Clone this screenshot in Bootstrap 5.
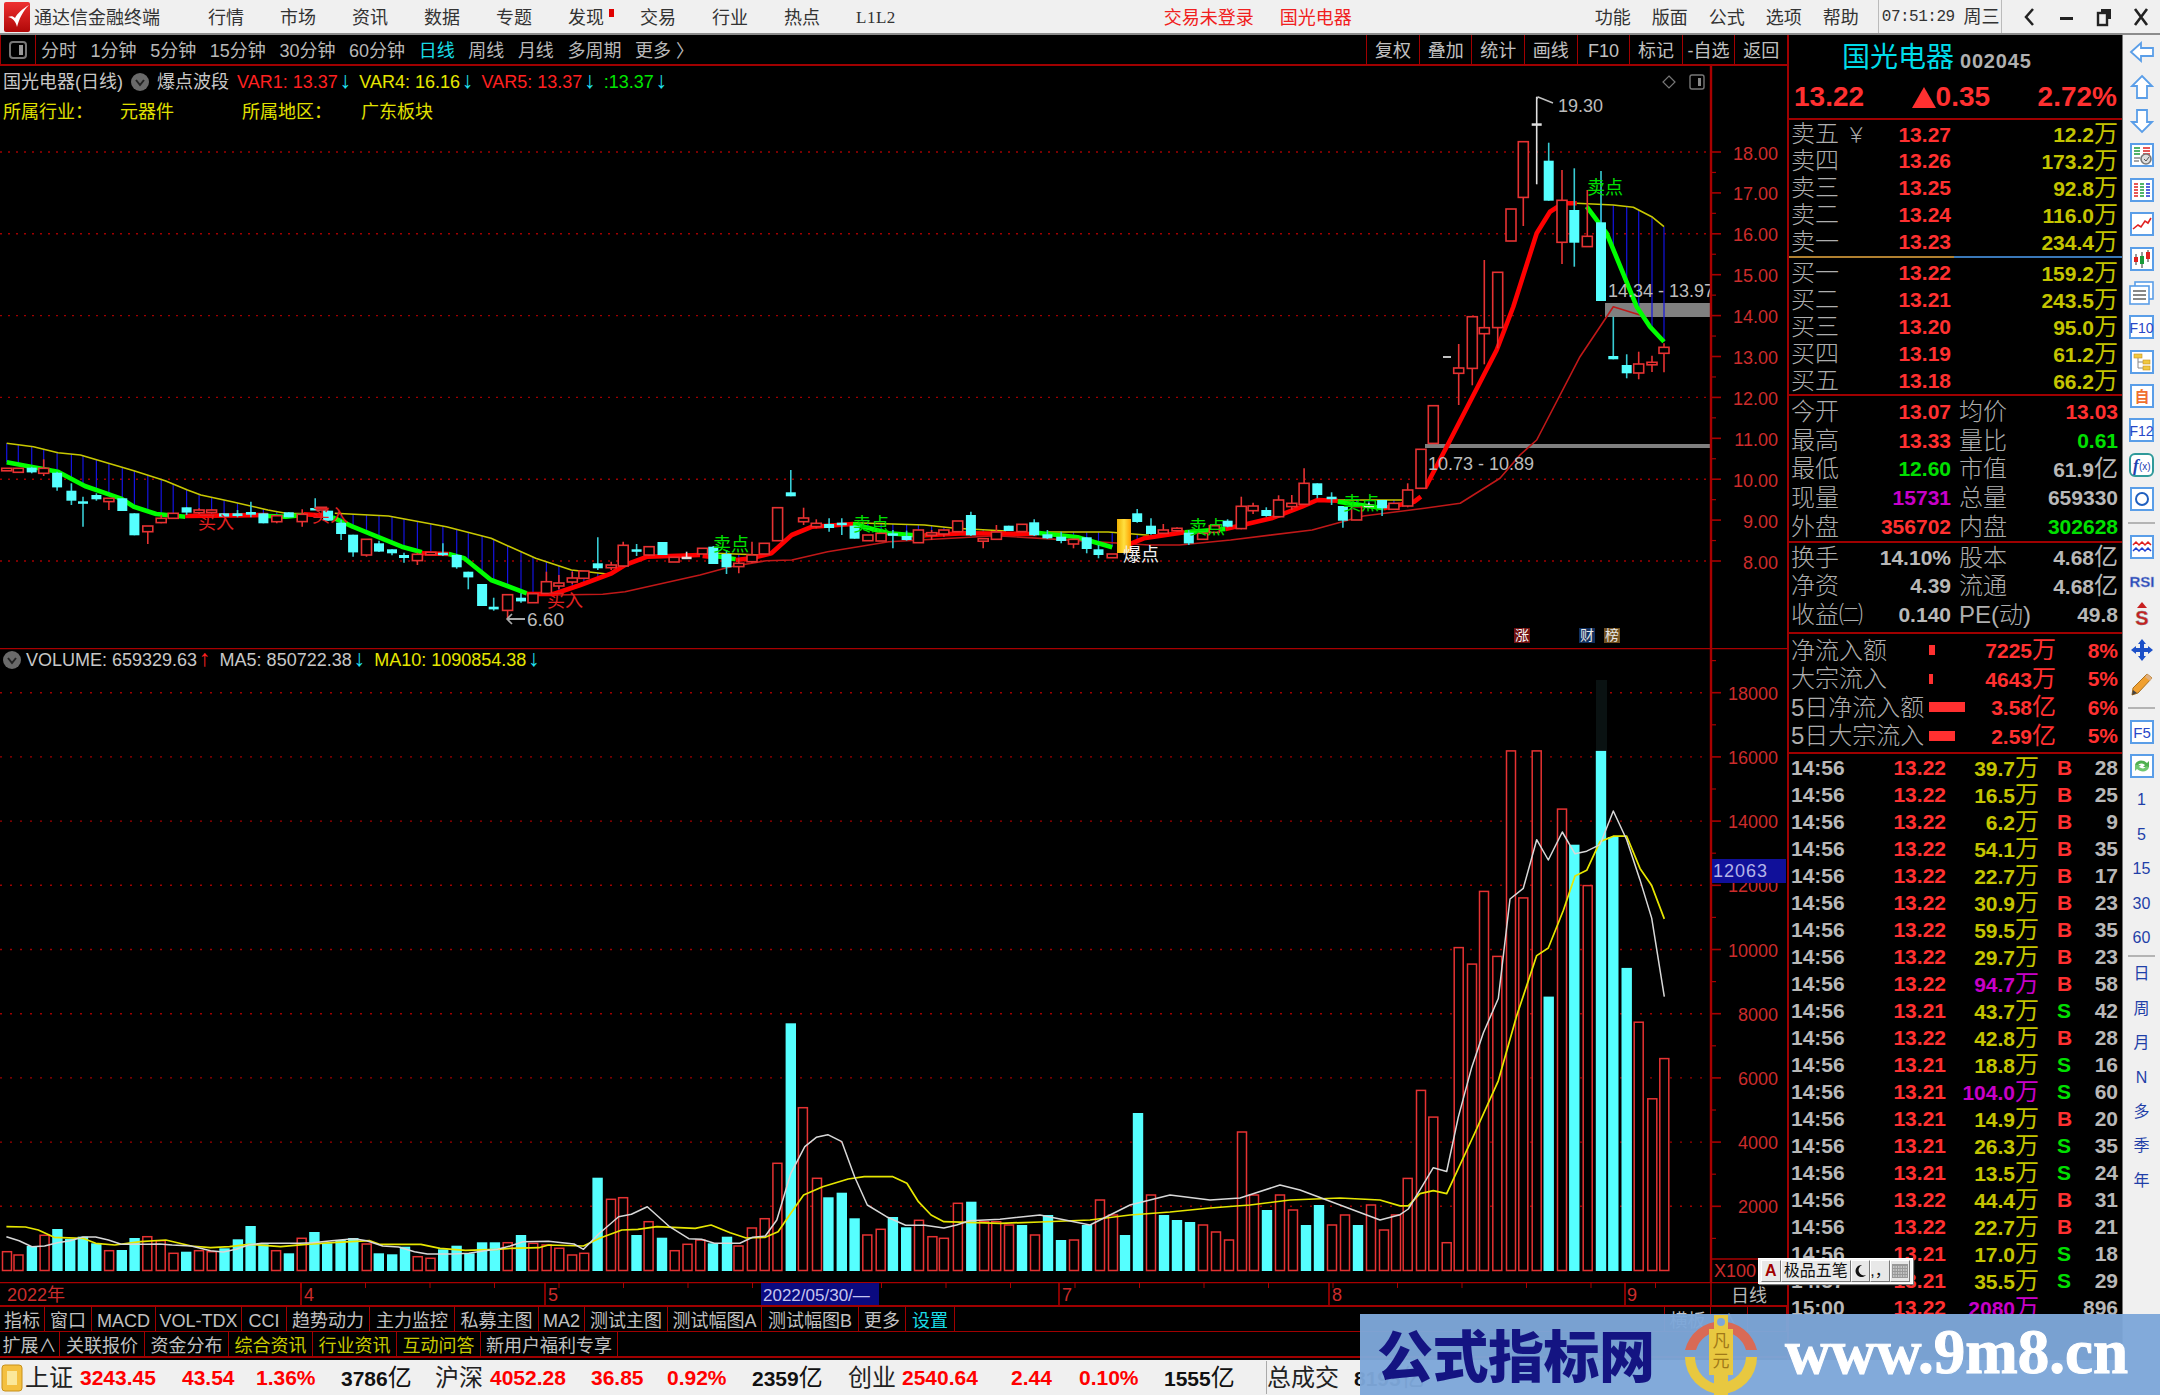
<!DOCTYPE html>
<html lang="zh-CN">
<head>
<meta charset="utf-8">
<title>通达信金融终端</title>
<link href="https://cdn.jsdelivr.net/npm/bootstrap@5.3.0/dist/css/bootstrap.min.css" rel="stylesheet">
<style>
html,body{margin:0;background:#000;}
body{font-family:"Liberation Sans","Noto Sans CJK SC",sans-serif;font-size:18px;line-height:1;color:#c0c0c0;}
.tdx-app{position:relative;width:2160px;height:1395px;overflow:hidden;background:#000;}
.tdx-title{height:35px;flex:none;background:#f0f0f0;border-bottom:2px solid #8c8c8c;color:#333;white-space:nowrap;}
.tdx-title>span,.tdx-title>div:not(.tdx-clock):not(.tdx-win){padding-top:2px;}
.tdx-logo{margin-left:4px;width:26px;height:30px;flex:none;}
.tdx-appname{margin-left:4px;width:174px;flex:none;}
.tdx-menu{column-gap:36px;}
.tdx-dot{width:5px;height:8px;background:#e00000;margin:-10px -10px 0 -31px;}
.tdx-l12{font-family:"Liberation Serif",serif;font-size:17px;letter-spacing:.5px;}
.tdx-alert{margin-left:268px;column-gap:26px;color:#f02020;}
.tdx-func{margin-left:243px;column-gap:21px;}
.tdx-clock{margin-left:19px;height:33px;width:124px;border-left:1px solid #bbb;border-right:1px solid #bbb;padding-left:3px;column-gap:9px;}
.tdx-clock span:first-child{font-size:16px;font-family:"Liberation Mono",monospace;letter-spacing:-.5px;}
.tdx-win{margin-left:19px;column-gap:19px;}
.tdx-body{height:1325px;flex:none;}
.tdx-left{width:1787px;flex:none;}
.tdx-tool{height:31px;flex:none;border-bottom:2px solid #a00000;}
.tdx-tool-ic{width:36px;height:29px;border-right:1px solid #a00000;border-left:1px solid #a00000;}
.tdx-tool-items{margin-left:5px;column-gap:13.6px;color:#b8b8b8;padding-top:3px;}
.tdx-cyan{color:#19dce6;}
.tdx-tool-r{width:52.6px;height:29px;border-left:1px solid #a00000;color:#c0c0c0;padding-top:3px;}
.tdx-pane{position:relative;flex:none;}
.tdx-price{height:582px;}
.tdx-vol{height:634px;}
.tdx-svg{position:absolute;left:0;top:0;display:block;}
.tdx-legend{position:relative;height:32px;padding-left:3px;column-gap:8px;white-space:nowrap;}
.tdx-legend2{position:relative;height:27px;padding-left:3px;color:#e0e000;}
.tdx-legend2 span:nth-child(1){width:117px;}
.tdx-legend2 span:nth-child(2){width:122px;}
.tdx-legend2 span:nth-child(3){width:119px;}
.tdx-volleg{position:relative;height:24px;padding-left:3px;column-gap:5px;white-space:nowrap;}
.c-red{color:#ff2020;}.c-yel{color:#e6e600;}.c-grn{color:#00e600;}.c-wht{color:#c8c8c8;}
.tdx-arr{color:#20e0f0;font-weight:400;margin-left:2px;font-size:23px;line-height:14px;}
.tdx-arr.up{color:#ff2020;}
.tdx-cell{display:flex;align-items:center;justify-content:center;border-right:1px solid #a00000;white-space:nowrap;overflow:hidden;}
.tdx-tabs1{display:grid;grid-template-columns:45px 47px 64px 86px 45px 83px 85px 84px 46px 83px 94px 97px 47px 49px 710px 46px 37px 39px;height:27px;border-top:2px solid #a00000;border-bottom:1px solid #a00000;flex:none;}
.tdx-tabs1 .tdx-cell{padding-top:3px;}
.tdx-tabs2{display:grid;grid-template-columns:60px 85px 84px 84px 84px 84px 137px;height:26px;border-bottom:2px solid #a00000;flex:none;}
.tdx-tabs2 .tdx-cell{padding-top:4px;}
.tdx-olive{color:#c8c800;}
.tdx-panel{width:336px;flex:none;border-left:2px solid #a00000;border-right:1px solid #777;overflow:hidden;}
.tdx-name{height:41px;padding:5px 0 0 53px;column-gap:6px;}
.tdx-name b{font-weight:400;font-size:28px;color:#00dcea;}
.tdx-name i{font-style:normal;font-weight:700;font-size:20px;letter-spacing:.8px;color:#b0b0b0;padding-top:6px;}
.tdx-quote{height:44px;padding:0 5px;border-bottom:2px solid #a00000;font-size:28px;font-weight:700;color:#ff3030;}
.tdx-lv{display:grid;grid-template-columns:100px 60px 167px;padding-left:2px;height:27px;align-items:center;}
.tdx-lbl{font-size:24px;color:#aeaeae;white-space:nowrap;line-height:27px;font-weight:300;}
.tdx-num{font-size:21px;font-weight:700;text-align:right;white-space:nowrap;}
.tdx-wan{font-size:24px;font-weight:400;}
.n-red{color:#ff3030;}.n-ol{color:#c4c400;}.n-grn{color:#00e000;}.n-mag{color:#c800c8;}.n-gry{color:#b8b8b8;}
.tdx-split{height:2px;margin-top:1px;margin-bottom:1px;background:linear-gradient(90deg,#b08030 0 165px,#3a78b8 165px);}
.tdx-rule{border-bottom:2px solid #a00000;}
.tdx-st1{padding-top:1px;}
.tdx-st2{padding-bottom:3px;}
.tdx-flw{padding:2px 0;}
.tdx-st{display:grid;grid-template-columns:84px 76px 8px 70px 89px;padding-left:2px;height:28.75px;align-items:center;}
.tdx-fl{display:grid;grid-template-columns:138px 45px 82px 62px;padding-left:2px;height:28.5px;align-items:center;}
.tdx-flbar{height:10px;background:#ff3030;}
.tdx-tk{display:grid;grid-template-columns:60px 95px 93px 38px 41px;padding-left:2px;height:27px;align-items:center;}
.tdx-bs{padding-left:18px;font-size:21px;font-weight:700;}
.tdx-side{width:37px;flex:none;background:#f0f0f0;padding-top:0;}
.tdx-slot{height:34.4px;flex:none;color:#1f3fa8;font-size:16px;}
.tdx-sep{height:2px;flex:none;margin:6px 4px 5px;background:#b4b4b4;}
.tdx-sep2{height:2px;flex:none;margin:0 4px;background:#b4b4b4;}
.tdx-foot{height:35px;flex:none;background:#f0f0f0;color:#222;display:grid;grid-template-columns:25px 55px 102px 74px 85px 94px 55px 101px 76px 85px 96px 54px 109px 68px 85px 102px 1px 87px 120px;align-items:center;white-space:nowrap;}
.tdx-fl1{font-size:24px;}
.tdx-fn{font-size:21px;font-weight:700;color:#ff0000;}
.tdx-fk{font-size:21px;font-weight:700;color:#111;}
.tdx-fk em{font-style:normal;font-weight:400;font-size:24px;}
.tdx-fdiv{height:33px;background:#aaa;}
.tdx-ime{position:absolute;left:1758px;top:1258px;width:155px;height:26px;background:#f4f4f4;border:1px solid #fff;box-shadow:1px 1px 1px #777;padding:1px 2px;}
.tdx-ime span{height:22px;display:flex;align-items:center;justify-content:center;border:1px solid;border-color:#fff #777 #777 #fff;background:#e8e8e8;color:#111;font-size:16px;}
.tdx-ime .a{width:20px;color:#a00000;font-weight:700;}
.tdx-ime .b{width:72px;}
.tdx-ime .c{width:20px;}
.tdx-mark{position:absolute;left:1360px;top:1314px;width:800px;height:81px;background:rgba(125,167,217,.965);}
.tdx-mark-cn{font-family:"Noto Sans CJK SC",sans-serif;font-weight:900;font-size:56px;color:#141482;margin-left:17px;width:304px;letter-spacing:-.5px;white-space:nowrap;margin-top:-4px;}
.tdx-mark-en{font-family:"Liberation Serif",serif;font-weight:700;font-size:63px;color:#fff;margin-left:24px;white-space:nowrap;-webkit-text-stroke:1px #fff;margin-top:-4px;}
</style>
</head>
<body>
<div class="tdx-app d-flex flex-column">

<header class="tdx-title d-flex align-items-center">
  <svg class="tdx-logo" viewBox="0 0 26 30"><defs><linearGradient id="lg" x1="0" y1="0" x2="0" y2="1"><stop offset="0" stop-color="#ee3030"/><stop offset="1" stop-color="#b00808"/></linearGradient></defs><rect width="26" height="30" rx="2" fill="url(#lg)"/><path d="M4 15 C9 16 12 20 13 25 C15 17 19 9 25 3 C18 7 13 12 11 16 C9 14 7 14 4 15Z" fill="#fff"/></svg>
  <span class="tdx-appname">通达信金融终端</span>
  <div class="tdx-menu d-flex align-items-center">
    <span>行情</span><span>市场</span><span>资讯</span><span>数据</span><span>专题</span><span>发现</span><span class="tdx-dot"></span><span>交易</span><span>行业</span><span>热点</span><span class="tdx-l12">L1L2</span>
  </div>
  <div class="tdx-alert d-flex"><span>交易未登录</span><span>国光电器</span></div>
  <div class="tdx-func d-flex"><span>功能</span><span>版面</span><span>公式</span><span>选项</span><span>帮助</span></div>
  <div class="tdx-clock d-flex align-items-center"><span>07:51:29</span><span>周三</span></div>
  <div class="tdx-win d-flex align-items-center">
    <svg width="18" height="20" viewBox="0 0 18 20"><path d="M12 2 L5 10 L12 18" fill="none" stroke="#222" stroke-width="2.5"/></svg>
    <svg width="18" height="20" viewBox="0 0 18 20"><rect x="2" y="10" width="13" height="3" fill="#222"/></svg>
    <svg width="18" height="20" viewBox="0 0 18 20"><path d="M6 2H16V12H13V5H6Z" fill="#222"/><rect x="3" y="6" width="9" height="12" fill="none" stroke="#222" stroke-width="2.4"/></svg>
    <svg width="18" height="20" viewBox="0 0 18 20"><path d="M3 2 L15 18 M15 2 L3 18" stroke="#222" stroke-width="2.6"/></svg>
  </div>
</header>

<div class="tdx-body d-flex">
<main class="tdx-left d-flex flex-column">
  <div class="tdx-tool d-flex align-items-center">
    <div class="tdx-tool-ic d-flex align-items-center justify-content-center"><svg width="18" height="20" viewBox="0 0 18 20"><rect x="1" y="2" width="16" height="16" rx="3" fill="none" stroke="#777" stroke-width="2"/><rect x="10" y="5" width="4" height="10" fill="#999"/></svg></div>
    <div class="tdx-tool-items d-flex align-items-center">
      <span>分时</span><span>1分钟</span><span>5分钟</span><span>15分钟</span><span>30分钟</span><span>60分钟</span><span class="tdx-cyan">日线</span><span>周线</span><span>月线</span><span>多周期</span><span>更多 〉</span>
    </div>
    <div class="d-flex ms-auto">
      <span class="tdx-tool-r d-flex align-items-center justify-content-center">复权</span><span class="tdx-tool-r d-flex align-items-center justify-content-center">叠加</span><span class="tdx-tool-r d-flex align-items-center justify-content-center">统计</span><span class="tdx-tool-r d-flex align-items-center justify-content-center">画线</span><span class="tdx-tool-r d-flex align-items-center justify-content-center">F10</span><span class="tdx-tool-r d-flex align-items-center justify-content-center">标记</span><span class="tdx-tool-r d-flex align-items-center justify-content-center">-自选</span><span class="tdx-tool-r d-flex align-items-center justify-content-center">返回</span>
    </div>
  </div>

  <section class="tdx-pane tdx-price">
    <svg id="pc" class="tdx-svg" width="1787" height="582" viewBox="0 66 1787 582"></svg>
    <div class="tdx-legend d-flex align-items-center">
      <span class="c-wht">国光电器(日线)</span>
      <svg width="18" height="18" viewBox="0 0 18 18"><circle cx="9" cy="9" r="9" fill="#6a6a6a"/><path d="M5 7 L9 12 L13 7" fill="none" stroke="#222" stroke-width="2"/></svg>
      <span class="c-wht">爆点波段</span>
      <span class="c-red">VAR1: 13.37<span class="tdx-arr">↓</span></span>
      <span class="c-yel">VAR4: 16.16<span class="tdx-arr">↓</span></span>
      <span class="c-red">VAR5: 13.37<span class="tdx-arr">↓</span></span>
      <span class="c-grn">:13.37<span class="tdx-arr">↓</span></span>
    </div>
    <div class="tdx-legend2 d-flex align-items-center"><span>所属行业：</span><span>元器件</span><span>所属地区：</span><span>广东板块</span></div>
  </section>

  <section class="tdx-pane tdx-vol">
    <svg id="vc" class="tdx-svg" width="1787" height="634" viewBox="0 648 1787 634"></svg>
    <div class="tdx-volleg d-flex align-items-center">
      <svg width="18" height="18" viewBox="0 0 18 18"><circle cx="9" cy="9" r="9" fill="#6a6a6a"/><path d="M5 7 L9 12 L13 7" fill="none" stroke="#222" stroke-width="2"/></svg>
      <span class="c-wht">VOLUME: 659329.63<span class="tdx-arr up">↑</span></span>
      <span class="c-wht ms-1">MA5: 850722.38<span class="tdx-arr">↓</span></span>
      <span class="c-yel ms-1">MA10: 1090854.38<span class="tdx-arr">↓</span></span>
    </div>
  </section>

  <svg id="dc" class="d-block flex-shrink-0" width="1787" height="23" viewBox="0 1282 1787 23"></svg>

  <div class="tdx-tabs1">
    <span class="tdx-cell">指标</span><span class="tdx-cell">窗口</span><span class="tdx-cell">MACD</span><span class="tdx-cell">VOL-TDX</span><span class="tdx-cell">CCI</span><span class="tdx-cell">趋势动力</span><span class="tdx-cell">主力监控</span><span class="tdx-cell">私募主图</span><span class="tdx-cell">MA2</span><span class="tdx-cell">测试主图</span><span class="tdx-cell">测试幅图A</span><span class="tdx-cell">测试幅图B</span><span class="tdx-cell">更多</span><span class="tdx-cell tdx-cyan">设置</span><span class="tdx-cell"></span><span class="tdx-cell">横板</span><span class="tdx-cell">∧</span><span class="tdx-cell"></span>
  </div>
  <div class="tdx-tabs2">
    <span class="tdx-cell">扩展∧</span><span class="tdx-cell">关联报价</span><span class="tdx-cell">资金分布</span><span class="tdx-cell tdx-olive">综合资讯</span><span class="tdx-cell tdx-olive">行业资讯</span><span class="tdx-cell tdx-olive">互动问答</span><span class="tdx-cell">新用户福利专享</span>
  </div>
</main>

<aside class="tdx-panel d-flex flex-column">
  <div class="tdx-name d-flex align-items-center"><b>国光电器</b><i>002045</i></div>
  <div class="tdx-quote d-flex align-items-center justify-content-between"><span>13.22</span><span class="d-flex align-items-center"><svg width="24" height="21" viewBox="0 0 24 21"><path d="M12 0 L24 21 H0Z" fill="#ff3030"/></svg>0.35</span><span>2.72%</span></div>
  <div id="lv1"></div>
  <div class="tdx-split"></div>
  <div id="lv2" class="tdx-rule"></div>
  <div id="st1" class="tdx-rule tdx-st1"></div>
  <div id="st2" class="tdx-rule tdx-st2"></div>
  <div id="fl" class="tdx-rule tdx-flw"></div>
  <div id="tk"></div>
</aside>

<nav class="tdx-side d-flex flex-column align-items-center">
  <div class="tdx-slot d-flex align-items-center justify-content-center"><svg width="26" height="24" viewBox="0 0 26 24"><path d="M2 12 L12 3 V8 H24 V16 H12 V21 Z" fill="#fff" stroke="#5a9ee8" stroke-width="1.8"/></svg></div>
  <div class="tdx-slot d-flex align-items-center justify-content-center"><svg width="24" height="26" viewBox="0 0 24 26"><path d="M12 2 L22 12 H17 V24 H7 V12 H2 Z" fill="#fff" stroke="#5a9ee8" stroke-width="1.8"/></svg></div>
  <div class="tdx-slot d-flex align-items-center justify-content-center"><svg width="24" height="26" viewBox="0 0 24 26"><path d="M7 2 H17 V14 H22 L12 24 2 14 H7Z" fill="#fff" stroke="#5a9ee8" stroke-width="1.8"/></svg></div>
  <div class="tdx-slot d-flex align-items-center justify-content-center"><svg width="24" height="24" viewBox="0 0 24 24"><rect x="1" y="1" width="22" height="22" fill="#fff" stroke="#5a9ee8" stroke-width="2"/><path d="M4 5H10M4 8H10M4 11H10" stroke="#1a9a3a" stroke-width="1.6"/><path d="M13 5H20M13 8H20M13 11H20" stroke="#e02020" stroke-width="1.6"/><path d="M4 15H10M4 18H9" stroke="#888" stroke-width="1.6"/><circle cx="16" cy="16" r="5" fill="#ddd" stroke="#777" stroke-width="1.6"/><path d="M14 16L16 18L19 14" fill="none" stroke="#555"/></svg></div>
  <div class="tdx-slot d-flex align-items-center justify-content-center"><svg width="24" height="24" viewBox="0 0 24 24"><rect x="1" y="1" width="22" height="22" fill="#fff" stroke="#5a9ee8" stroke-width="2"/><path d="M4 6H8M4 9H8M4 12H8M4 15H8M4 18H8" stroke="#e02020" stroke-width="1.6"/><path d="M10 6H14M10 9H14M10 12H14M10 15H14M10 18H14" stroke="#1a9a3a" stroke-width="1.6"/><path d="M16 6H20M16 9H20M16 12H20M16 15H20M16 18H20" stroke="#2030d0" stroke-width="1.6"/></svg></div>
  <div class="tdx-slot d-flex align-items-center justify-content-center"><svg width="24" height="24" viewBox="0 0 24 24"><rect x="1" y="1" width="22" height="22" fill="#fff" stroke="#5a9ee8" stroke-width="2"/><path d="M3 17L8 13L11 15L15 9L18 11L21 6" fill="none" stroke="#e02020" stroke-width="1.6"/></svg></div>
  <div class="tdx-slot d-flex align-items-center justify-content-center"><svg width="24" height="24" viewBox="0 0 24 24"><rect x="1" y="1" width="22" height="22" fill="#fff" stroke="#5a9ee8" stroke-width="2"/><path d="M6 7V18M12 5V21M18 3V15" stroke="#333"/><rect x="4" y="10" width="4" height="5" fill="#e02020"/><rect x="10" y="9" width="4" height="8" fill="#1a9a3a"/><rect x="16" y="5" width="4" height="7" fill="#e02020"/></svg></div>
  <div class="tdx-slot d-flex align-items-center justify-content-center"><svg width="25" height="24" viewBox="0 0 25 24"><rect x="6" y="1" width="18" height="17" fill="#fff" stroke="#5a9ee8" stroke-width="1.6"/><rect x="1" y="5" width="19" height="18" fill="#fff" stroke="#5a9ee8" stroke-width="1.6"/><path d="M4 10H17M4 14H17M4 18H17" stroke="#888" stroke-width="2"/></svg></div>
  <div class="tdx-slot d-flex align-items-center justify-content-center"><svg width="25" height="24" viewBox="0 0 25 24"><rect x="1" y="1" width="23" height="22" fill="#fff" stroke="#5a9ee8" stroke-width="2"/><text x="12.5" y="18" text-anchor="middle" font-family="Liberation Sans" font-size="14" fill="#2848c8">F10</text></svg></div>
  <div class="tdx-slot d-flex align-items-center justify-content-center"><svg width="24" height="24" viewBox="0 0 24 24"><rect x="1" y="1" width="22" height="22" fill="#fff" stroke="#5a9ee8" stroke-width="2"/><path d="M8 8V18H14M8 12H14" fill="none" stroke="#888"/><rect x="4" y="4" width="8" height="4" fill="#f0c840" stroke="#c89020" stroke-width=".6"/><rect x="13" y="10" width="7" height="4" fill="#f0c840" stroke="#c89020" stroke-width=".6"/><rect x="13" y="16" width="7" height="4" fill="#f0c840" stroke="#c89020" stroke-width=".6"/></svg></div>
  <div class="tdx-slot d-flex align-items-center justify-content-center"><svg width="24" height="24" viewBox="0 0 24 24"><rect x="1" y="1" width="22" height="22" fill="#fff" stroke="#5a9ee8" stroke-width="2"/><text x="12" y="18" text-anchor="middle" font-family="Noto Sans CJK SC" font-size="15" font-weight="700" fill="#f07030">自</text></svg></div>
  <div class="tdx-slot d-flex align-items-center justify-content-center"><svg width="25" height="24" viewBox="0 0 25 24"><rect x="1" y="1" width="23" height="22" fill="#fff" stroke="#5a9ee8" stroke-width="2"/><text x="12.5" y="18" text-anchor="middle" font-family="Liberation Sans" font-size="14" fill="#2848c8">F12</text></svg></div>
  <div class="tdx-slot d-flex align-items-center justify-content-center"><svg width="25" height="24" viewBox="0 0 25 24"><rect x="1" y="1" width="23" height="22" rx="5" fill="#fff" stroke="#2f9a9a" stroke-width="2"/><text x="4" y="18" font-family="Liberation Serif" font-style="italic" font-weight="700" font-size="17" fill="#2040b0">f</text><text x="10" y="17" font-family="Liberation Sans" font-size="10" fill="#2040b0">(x)</text></svg></div>
  <div class="tdx-slot d-flex align-items-center justify-content-center"><svg width="24" height="24" viewBox="0 0 24 24"><rect x="1" y="1" width="22" height="22" fill="#fff" stroke="#5a9ee8" stroke-width="2"/><circle cx="12" cy="12" r="6" fill="none" stroke="#2060c0" stroke-width="2"/></svg></div>
  <div class="tdx-sep w-75"></div>
  <div class="tdx-slot d-flex align-items-center justify-content-center"><svg width="24" height="24" viewBox="0 0 24 24"><rect x="1" y="1" width="22" height="22" fill="#fff" stroke="#5a9ee8" stroke-width="2"/><path d="M3 10L6 7L9 10L12 7L15 10L18 7L21 10" fill="none" stroke="#e02020" stroke-width="1.5"/><path d="M3 16L6 13L9 16L12 13L15 16L18 13L21 16" fill="none" stroke="#2040d0" stroke-width="1.5"/></svg></div>
  <div class="tdx-slot d-flex align-items-center justify-content-center"><svg width="26" height="20" viewBox="0 0 26 20"><text x="13" y="16" text-anchor="middle" font-family="Liberation Sans" font-weight="700" font-size="15" fill="#2a48b8" stroke="#9aa8d8" stroke-width=".4">RSI</text></svg></div>
  <div class="tdx-slot d-flex align-items-center justify-content-center"><svg width="24" height="26" viewBox="0 0 24 26"><path d="M12 0L17 6H7Z" fill="#c82020"/><text x="12" y="23" text-anchor="middle" font-family="Liberation Sans" font-weight="700" font-size="20" fill="#c82020" stroke="#888" stroke-width=".4">S</text></svg></div>
  <div class="tdx-slot d-flex align-items-center justify-content-center"><svg width="24" height="24" viewBox="0 0 24 24"><path d="M12 1L16 6H14V10H18V8L23 12L18 16V14H14V18H16L12 23L8 18H10V14H6V16L1 12L6 8V10H10V6H8Z" fill="#1c50c8"/></svg></div>
  <div class="tdx-slot d-flex align-items-center justify-content-center"><svg width="24" height="24" viewBox="0 0 24 24"><path d="M17 2L22 6L8 21L2 23L3 16Z" fill="#f0a030" stroke="#a87020"/><path d="M2 23L3 18L7 21Z" fill="#444"/><path d="M17 2L22 6L20 9L15 5Z" fill="#e0b080"/></svg></div>
  <div class="tdx-sep w-75"></div>
  <div class="tdx-slot d-flex align-items-center justify-content-center"><svg width="24" height="24" viewBox="0 0 24 24"><rect x="1" y="1" width="22" height="22" fill="#fff" stroke="#5a9ee8" stroke-width="2"/><text x="12" y="18" text-anchor="middle" font-family="Liberation Sans" font-size="15" fill="#2848c8">F5</text></svg></div>
  <div class="tdx-slot d-flex align-items-center justify-content-center"><svg width="24" height="24" viewBox="0 0 24 24"><rect x="1" y="1" width="22" height="22" fill="#fff" stroke="#5a9ee8" stroke-width="2"/><path d="M5 11C6 6 13 5 17 9L19 7V13H13L15 11C12 9 9 9 8 12Z" fill="#50b050"/><path d="M19 13C18 18 11 19 7 15L5 17V11H11L9 13C12 15 15 15 16 12Z" fill="#70c870"/></svg></div>
  <div class="tdx-slot d-flex align-items-center justify-content-center">1</div>
  <div class="tdx-slot d-flex align-items-center justify-content-center">5</div>
  <div class="tdx-slot d-flex align-items-center justify-content-center">15</div>
  <div class="tdx-slot d-flex align-items-center justify-content-center">30</div>
  <div class="tdx-slot d-flex align-items-center justify-content-center">60</div>
  <div class="tdx-sep2 w-75"></div>
  <div class="tdx-slot d-flex align-items-center justify-content-center">日</div>
  <div class="tdx-slot d-flex align-items-center justify-content-center">周</div>
  <div class="tdx-slot d-flex align-items-center justify-content-center">月</div>
  <div class="tdx-slot d-flex align-items-center justify-content-center">N</div>
  <div class="tdx-slot d-flex align-items-center justify-content-center">多</div>
  <div class="tdx-slot d-flex align-items-center justify-content-center">季</div>
  <div class="tdx-slot d-flex align-items-center justify-content-center">年</div>
</nav>
</div>

<footer class="tdx-foot">
  <svg width="24" height="30" viewBox="0 0 24 30"><rect x="2" y="2" width="20" height="26" rx="3" fill="#f4c040" stroke="#c89018"/><rect x="7" y="8" width="10" height="14" fill="#fbe89a"/></svg>
  <span class="tdx-fl1">上证</span><span class="tdx-fn">3243.45</span><span class="tdx-fn">43.54</span><span class="tdx-fn">1.36%</span><span class="tdx-fk">3786<em>亿</em></span>
  <span class="tdx-fl1">沪深</span><span class="tdx-fn">4052.28</span><span class="tdx-fn">36.85</span><span class="tdx-fn">0.92%</span><span class="tdx-fk">2359<em>亿</em></span>
  <span class="tdx-fl1">创业</span><span class="tdx-fn">2540.64</span><span class="tdx-fn">2.44</span><span class="tdx-fn">0.10%</span><span class="tdx-fk">1555<em>亿</em></span>
  <span class="tdx-fdiv"></span><span class="tdx-fl1">总成交</span><span class="tdx-fk">8195<em>亿</em></span>
</footer>

<div class="tdx-ime d-flex">
  <span class="a">A</span><span class="b">极品五笔</span><span class="c">
    <svg width="12" height="14" viewBox="0 0 12 14"><path d="M7 1A6 6 0 1 0 11 11A5 5 0 0 1 7 1Z" fill="#111"/></svg></span><span class="c">,，</span><span class="c"><svg width="16" height="14" viewBox="0 0 16 14"><rect width="16" height="14" fill="#999"/><path d="M1 3H15M1 6H15M1 9H15M1 12H15" stroke="#eee" stroke-dasharray="1.5 1"/></svg></span>
</div>

<div class="tdx-mark d-flex align-items-center">
  <span class="tdx-mark-cn">公式指标网</span>
  <svg class="flex-shrink-0" width="80" height="80" viewBox="0 0 80 80">
    <path d="M4 35 A37 37 0 0 1 76 35 L65 35 A26 26 0 0 0 15 35Z" fill="#d96a55"/>
    <path d="M4 42 A37 37 0 0 0 40 79 L40 70 A28 28 0 0 1 14 42Z" fill="#e8c840"/>
    <path d="M76 42 A37 37 0 0 1 40 79 L40 68 A27 27 0 0 0 65 42Z" fill="#e8c840"/>
    <path d="M33 0H47V14H52V60H47V80H33V60H28V14H33Z" fill="#e8c840"/>
    <rect x="36" y="3" width="8" height="8" rx="4" fill="#7da7d9"/>
    <text x="40" y="32" text-anchor="middle" font-family="Noto Sans CJK SC" font-size="17" fill="#a07818">凡</text>
    <text x="40" y="52" text-anchor="middle" font-family="Noto Sans CJK SC" font-size="17" fill="#a07818">元</text>
  </svg>
  <span class="tdx-mark-en">www.9m8.cn</span>
</div>
</div>

<script src="https://cdn.jsdelivr.net/npm/bootstrap@5.3.0/dist/js/bootstrap.bundle.min.js"></script>
<script>
/* ---------- quote panel ---------- */
const wan=(s,u)=>`<span class="tdx-num n-ol">${s}<span class="tdx-wan">${u||'万'}</span></span>`;
const lv=(l,p,v)=>`<div class="tdx-lv"><span class="tdx-lbl">${l}</span><span class="tdx-num n-red">${p}</span>${wan(v)}</div>`;
document.getElementById('lv1').innerHTML=[['卖五 <small>￥</small>','13.27','12.2'],['卖四','13.26','173.2'],['卖三','13.25','92.8'],['卖二','13.24','116.0'],['卖一','13.23','234.4']].map(r=>lv(...r)).join('');
document.getElementById('lv2').innerHTML=[['买一','13.22','159.2'],['买二','13.21','243.5'],['买三','13.20','95.0'],['买四','13.19','61.2'],['买五','13.18','66.2']].map(r=>lv(...r)).join('');
const st=(a,av,ac,b,bv,bc)=>`<div class="tdx-st"><span class="tdx-lbl">${a}</span><span class="tdx-num ${ac}">${av}</span><span></span><span class="tdx-lbl">${b}</span><span class="tdx-num ${bc}">${bv}</span></div>`;
const yi=s=>s+'<span class="tdx-wan">亿</span>';
document.getElementById('st1').innerHTML=[
 ['今开','13.07','n-red','均价','13.03','n-red'],['最高','13.33','n-red','量比','0.61','n-grn'],['最低','12.60','n-grn','市值',yi('61.9'),'n-gry'],
 ['现量','15731','n-mag','总量','659330','n-gry'],['外盘','356702','n-red','内盘','302628','n-grn']].map(r=>st(...r)).join('');
document.getElementById('st2').innerHTML=[
 ['换手','14.10%','n-gry','股本',yi('4.68'),'n-gry'],['净资','4.39','n-gry','流通',yi('4.68'),'n-gry'],['收益㈡','0.140','n-gry','PE(动)','49.8','n-gry']].map(r=>st(...r)).join('');
document.getElementById('fl').innerHTML=[['净流入额',6,'7225','万','8%'],['大宗流入',4,'4643','万','5%'],['5日净流入额',36,'3.58','亿','6%'],['5日大宗流入',26,'2.59','亿','5%']].map(r=>
 `<div class="tdx-fl"><span class="tdx-lbl">${r[0]}</span><span><div class="tdx-flbar" style="width:${r[1]}px"></div></span><span class="tdx-num n-red">${r[2]}<span class="tdx-wan">${r[3]}</span></span><span class="tdx-num n-red">${r[4]}</span></div>`).join('');
const ticks=[['14:56','13.22','39.7','B','28'],['14:56','13.22','16.5','B','25'],['14:56','13.22','6.2','B','9'],['14:56','13.22','54.1','B','35'],['14:56','13.22','22.7','B','17'],['14:56','13.22','30.9','B','23'],['14:56','13.22','59.5','B','35'],['14:56','13.22','29.7','B','23'],['14:56','13.22','94.7','B','58',1],['14:56','13.21','43.7','S','42'],['14:56','13.22','42.8','B','28'],['14:56','13.21','18.8','S','16'],['14:56','13.21','104.0','S','60',1],['14:56','13.21','14.9','B','20'],['14:56','13.21','26.3','S','35'],['14:56','13.21','13.5','S','24'],['14:56','13.22','44.4','B','31'],['14:56','13.22','22.7','B','21'],['14:56','13.21','17.0','S','18'],['14:57','13.21','35.5','S','29'],['15:00','13.22','2080','','896',1]];
document.getElementById('tk').innerHTML=ticks.map(t=>`<div class="tdx-tk"><span class="tdx-num n-gry text-start">${t[0]}</span><span class="tdx-num n-red">${t[1]}</span><span class="tdx-num ${t[5]?'n-mag':'n-ol'}">${t[2]}<span class="tdx-wan">万</span></span><span class="tdx-bs ${t[3]=='S'?'n-grn':'n-red'}">${t[3]}</span><span class="tdx-num n-gry">${t[4]}</span></div>`).join('');

/* ---------- chart helpers ---------- */
const RED='#e63232',CY='#55ffff',AX='#a80000',LBL='#cc2c2c';
const poly=(p,c,w)=>`<polyline points="${p.map(q=>q[0].toFixed(1)+','+q[1].toFixed(1)).join(' ')}" fill="none" stroke="${c}" stroke-width="${w}" stroke-linejoin="round"/>`;
const ln=(a,b,c,d,col,w,extra)=>`<line x1="${a}" y1="${b}" x2="${c}" y2="${d}" stroke="${col}" stroke-width="${w||1}" ${extra||''}/>`;
const txt=(x,y,s,col,size,anchor,extra)=>`<text x="${x}" y="${y}" fill="${col}" font-size="${size||18}" text-anchor="${anchor||'start'}" font-family="Liberation Sans,Noto Sans CJK SC,sans-serif" ${extra||''}>${s}</text>`;
const Z8=p=>[p[0]/2.24,430+p[1]/3],Z9=p=>[700+p[0]/1.96,430+p[1]/3],Z7=p=>[1380+p[0]/3,90+p[1]/3];

/* ---------- candles: [x,type,bodyTop,bodyBot,high,low] in zoom space ---------- */
const c8=[[15,'R',115,122],[41,'R',115,127],[71,'C',113,127,110,130],[98,'R',115,130,88,138],[128,'C',128,172,125,182],[160,'C',182,212,160,225],[186,'C',214,220,200,290],[216,'C',195,208,190,212],[244,'R',205,215,205,240],[274,'C',205,243],[301,'C',250,316],[331,'R',288,305,288,342],[361,'R',265,278,255,280],[388,'R',250,265],[418,'C',232,248,232,255],[446,'R',240,248,235,252],[474,'R',240,246,238,250],[502,'C',250,260],[532,'C',250,258,240,262],[562,'C',246,254,215,262],[590,'C',250,280],[620,'R',257,275,255,280],[647,'C',247,262],[677,'R',253,275,238,290],[706,'C',234,237,205,240],[720,'R',232,240],[735,'C',242,272],[764,'C',278,312,270,330],[791,'C',314,367,314,380],[821,'R',328,375,328,380],[849,'C',340,365,332,366],[878,'C',358,370,358,376],[905,'C',375,384,368,398],[935,'R',373,392,368,405],[965,'R',367,373],[992,'C',368,375,340,378],[1023,'C',375,412,372,416],[1049,'C',425,442,425,478],[1080,'C',462,528],[1106,'C',530,538,503,542],[1137,'R',494,541,494,570],[1167,'C',503,514,490,518],[1194,'R',491,518],[1224,'R',455,490,425,490],[1252,'R',459,468,435,478],[1282,'R',444,456,425,462],[1308,'R',423,445],[1339,'C',400,415,322,420],[1369,'R',405,413,395,420],[1396,'R',346,408,335,410],[1426,'C',358,361,342,378],[1454,'R',350,375,348,378],[1484,'C',336,375],[1510,'R',382,396],[1538,'W',380,383,365,383]];
const c9=[[5,'R',355,372],[26,'C',350,402,348,402],[52,'C',372,412,360,432],[76,'R',400,410,385,430],[102,'R',375,395,335,398],[126,'R',340,372],[152,'R',233,332],[178,'C',187,199,120,199],[203,'R',264,275,233,285],[228,'R',280,290,268,295],[253,'C',282,294,265,305],[278,'C',278,281,265,315],[303,'C',287,326],[329,'R',315,332],[355,'R',310,333],[378,'C',310,315,300,355],[405,'C',318,330,302,332],[428,'R',300,338],[454,'R',308,313,300,330],[478,'R',300,312,300,320],[505,'R',273,305],[531,'C',255,316,245,318],[555,'R',326,333,326,355],[581,'R',306,328,285,330],[605,'C',287,303],[631,'R',283,305],[655,'C',277,316,268,318],[681,'C',313,325,300,327],[708,'C',320,333,305,340],[732,'R',328,342,328,355],[758,'C',322,357,322,370],[781,'C',358,375,345,385],[808,'R',372,383],[857,'C',250,276,237,278],[884,'C',287,312,265,314],[908,'R',300,310,282,312],[935,'R',295,302,292,304],[958,'C',308,340,300,345],[985,'R',310,328],[1008,'R',287,307],[1034,'C',272,290,268,292],[1061,'R',229,296,200,298],[1084,'R',228,242,218,252],[1110,'C',240,258,232,260],[1134,'R',210,260,196,262],[1160,'R',220,230,195,240],[1184,'R',160,223,115,225],[1210,'C',160,195,160,205],[1238,'C',200,207,187,225],[1260,'C',228,272,228,293],[1287,'R',230,270],[1311,'W',224,226,218,232],[1337,'C',210,235,210,258],[1360,'R',220,238],[1387,'R',180,228,160,232]];
const c7=[[123,'R',1078,1195],[160,'R',947,1060],[236,'R',834,850,762,945],[277,'R',680,835,680,886],[313,'R',713,731,510,823],[353,'R',547,713,547,775],[393,'R',357,453],[430,'R',155,322,155,408],[470,'W',100,103,20,283],[506,'C',212,332,158,332],[546,'R',331,457,240,522],[583,'C',360,458,235,530],[622,'R',439,470,300,470],[663,'C',397,633,243,633],[700,'C',798,808,680,808],[740,'C',825,850,793,865],[776,'R',822,849,785,868],[816,'R',817,820,797,846],[852,'R',772,790,760,847]];
const candles=[];
const add=(arr,Z)=>arr.forEach(c=>{const [x,t]=[Z([c[0],0])[0],c[1]];const y=v=>Z([0,v])[1];candles.push({x,t,a:y(c[2]),b:y(c[3]),h:c[4]!=null?y(c[4]):y(c[2]),l:c[5]!=null?y(c[5]):y(c[3])});});
add(c8,Z8);add(c9,Z9);add(c7,Z7);

/* ---------- price MA lines ---------- */
const G='#00ff00',R='#ff0000';
const thick=[
 [G,Z8,[[15,97],[60,108],[130,125],[190,168],[270,205],[300,230],[350,252],[415,260]]],[R,Z8,[[415,258],[600,255]]],[G,Z8,[[600,258],[640,260],[680,255]]],[R,Z8,[[680,253],[745,258]]],[G,Z8,[[745,262],[790,290],[900,350],[945,367]]],[R,Z8,[[945,370],[1005,372]]],[G,Z8,[[1005,372],[1040,385],[1100,450],[1180,490]]],[R,Z8,[[1180,492],[1240,492],[1300,465],[1370,430],[1400,405],[1450,380],[1568,375]]],
 [R,Z9,[[5,378],[30,382]]],[G,Z9,[[30,378],[70,388]]],[R,Z9,[[70,390],[100,385],[140,370],[180,315],[220,290],[300,282]]],[G,Z9,[[300,282],[370,310],[440,318]]],[R,Z9,[[440,316],[520,310],[660,312]]],[G,Z9,[[660,308],[740,322],[808,352]]],[R,Z9,[[820,356],[870,325],[950,307]]],[G,Z9,[[950,307],[1030,297]]],[R,Z9,[[1030,297],[1120,265],[1180,230],[1210,210],[1250,212]]],[G,Z9,[[1250,215],[1340,235]]],[R,Z9,[[1340,235],[1400,215],[1413,200]]],
 [R,Z7,[[135,1195],[200,1070],[350,780],[400,650],[470,430],[510,365],[550,340],[590,340]]],[G,Z7,[[620,350],[680,430],[770,650],[810,710],[852,755]]]
].map(s=>({c:s[0],p:s[2].map(s[1])}));
const yel=[[Z8,[[15,40],[75,50],[130,68],[180,75],[300,122],[370,152],[420,180],[450,195],[520,215],[600,240],[640,250],[720,252]]],[Z8,[[750,250],[870,258],[1000,290],[1100,325],[1200,385],[1280,420],[1360,432]]],
 [Z9,[[30,370],[120,375]]],[Z9,[[300,278],[440,285],[500,295],[600,303]]],[Z9,[[680,306],[800,306],[880,316]]],[Z9,[[940,306],[1020,300]]],[Z9,[[1240,210],[1380,210]]],[Z7,[[590,340],[700,345],[760,352],[815,380],[852,410]]]].map(s=>s[1].map(s[0]));
const interp=(p,x)=>{for(let i=0;i<p.length-1;i++){if(x>=p[i][0]&&x<=p[i+1][0]){const f=(x-p[i][0])/(p[i+1][0]-p[i][0]||1);return p[i][1]+f*(p[i+1][1]-p[i][1]);}}return null;};
const thin=[...[[1240,495],[1350,493],[1400,485],[1568,435]].map(Z8),...[[60,410],[130,392],[180,390],[250,365],[370,335],[580,317],[880,345],[940,345],[1040,330],[1200,300],[1300,258],[1420,235],[1490,220],[1568,145]].map(Z9),...[[420,1095],[470,1050],[600,800],[680,680],[700,650],[780,675]].map(Z7)];

/* ---------- price chart ---------- */
const py=p=>152+(18-p)*40.9;
let s='';
for(const p of [18,16,14,12,10,8]) s+=ln(0,py(p),1711,py(p),'#a00000',1.4,'stroke-dasharray="2 6"');
s+=`<rect x="1605" y="303" width="106" height="14" fill="#808080"/><rect x="1425" y="444" width="286" height="4" fill="#808080"/>`;
for(const seg of yel){for(const c of candles){const y1=interp(seg,c.x);if(y1==null)continue;let y2=null;for(const t of thick){const v=interp(t.p,c.x);if(v!=null){y2=v;break;}}if(y2!=null&&y2>y1+2)s+=ln(c.x.toFixed(1),y1.toFixed(1),c.x.toFixed(1),y2.toFixed(1),'#1414e0',1.2);}}
for(const seg of yel)s+=poly(seg,'#c8c800',1.6);
s+=poly(thin,'#c01818',1.6);
for(const t of thick)s+=poly(t.p,t.c,4.6);
for(const c of candles){const col=c.t=='R'?RED:c.t=='C'?CY:'#e0e0e0',wk=c.t=='C'?'#38ccd4':col;
 s+=ln(c.x.toFixed(1),c.h.toFixed(1),c.x.toFixed(1),c.l.toFixed(1),wk,1.6);
 const h=Math.max(c.b-c.a,2.5);
 s+=`<rect x="${(c.x-5).toFixed(1)}" y="${c.a.toFixed(1)}" width="10" height="${h.toFixed(1)}" fill="${c.t=='R'?'#000':col}" stroke="${c.t=='R'?col:'none'}" stroke-width="${c.t=='R'?1.6:0}"/>`;}
s+=`<defs><linearGradient id="gold" x1="0" x2="1"><stop offset="0" stop-color="#f0b000"/><stop offset=".5" stop-color="#ffe040"/><stop offset="1" stop-color="#ffa000"/></linearGradient></defs><rect x="1117" y="519" width="14" height="34" fill="url(#gold)"/>`;
/* annotations */
s+=poly([[1537,99],[1538,97],[1553,103]],'#c0c0c0',1.4)+txt(1558,112,'19.30','#bcbcbc',18);
s+=ln(1443,357,1451,357,'#c0c0c0',2);
s+=txt(1608,297,'14.34 - 13.97','#bcbcbc',18,'start','clip-path="url(#axclip)"')+txt(1428,470,'10.73 - 10.89','#bcbcbc',18);
s+=`<clipPath id="axclip"><rect x="0" y="66" width="1710" height="600"/></clipPath>`;
s+=ln(508,619,525,619,'#aaa',2)+poly([[512,614],[507,619],[512,624]],'#aaa',1.6)+txt(527,626,'6.60','#bcbcbc',19);
for(const [x,y] of [[1587,194],[713,551],[853,531],[1189,534],[1343,510]]) s+=txt(x,y,'卖点','#00e000',18);
s+=txt(1123,561,'爆点','#f0f0f0',18);
for(const [x,y] of [[198,529],[312,522],[547,607]]) s+=txt(x,y,'买入','#e02020',18);
s+=`<rect x="1514" y="628" width="16" height="15" fill="#701010"/>`+txt(1522,640,'涨','#f4f4f4',14,'middle');
s+=`<rect x="1579" y="628" width="16" height="15" fill="#103060"/>`+txt(1587,640,'财','#e8e8e8',14,'middle');
s+=`<rect x="1604" y="628" width="16" height="15" fill="#705020"/>`+txt(1612,640,'榜','#e8e8e8',14,'middle');
s+=`<path d="M1669 76L1675 82L1669 88L1663 82Z" fill="none" stroke="#777" stroke-width="1.2"/><rect x="1690" y="75" width="14" height="14" rx="2" fill="none" stroke="#777" stroke-width="1.4"/><rect x="1698" y="78" width="3" height="8" fill="#888"/>`;
/* axis */
s+=ln(1711,66,1711,648,AX,2.4);
for(let p=8;p<=18;p++){s+=ln(1711,py(p),1721,py(p),AX,1.6);s+=txt(1778,py(p)+7.5,p.toFixed(2),LBL,18,'end');}
for(let p=8.5;p<18.5;p+=1)s+=ln(1711,py(p),1716,py(p),AX,1.2);
document.getElementById('pc').innerHTML=s;

/* ---------- volume chart ---------- */
const v12=[[11,'R',755],[29,'R',765],[50,'C',738],[70,'R',706],[90,'C',687],[110,'C',717],[130,'C',710],[151,'C',730],[171,'R',752],[191,'C',750],[211,'C',714],[231,'R',710],[252,'R',722],[272,'R',760],[292,'C',755],[312,'R',752],[332,'R',755],[352,'C',745],[373,'C',718],[393,'C',678],[413,'C',733],[433,'R',752],[453,'C',760],[473,'R',715],[493,'C',696],[513,'C',730],[534,'C',720],[554,'C',714],[575,'R',732],[594,'C',760],[615,'C',763],[635,'C',740],[655,'R',770],[675,'R',775],[695,'C',748],[716,'C',737],[736,'C',760],[756,'C',727],[776,'C',727],[796,'R',728],[817,'C',705],[836,'R',730],[857,'R',735],[877,'R',745],[897,'R',765],[916,'R',760],[937,'C',533],[958,'R',598],[977,'R',593],[998,'C',705],[1017,'R',665],[1038,'C',713],[1058,'R',752],[1078,'R',733],[1098,'R',720],[1118,'C',730],[1140,'C',710],[1158,'R',738],[1179,'R',684],[1199,'R',656],[1219,'R',490],[1240,'C',70],[1259,'R',323],[1281,'R',535],[1299,'C',592],[1320,'C',578],[1340,'C',655],[1360,'R',705],[1381,'R',688],[1400,'C',651],[1421,'C',682],[1441,'R',661],[1462,'R',710],[1480,'R',715],[1502,'R',610],[1523,'C',605],[1543,'R',665],[1562,'R',665]].map(b=>[b[0]/1.568,b[1],1000+b[2]/3]);
const vMid=[[1009,'R',1225],[1022,'C',1225],[1035,'R',1235],[1048,'C',1215],[1061,'C',1240],[1074,'R',1240],[1087,'C',1225],[1100,'R',1200],[1113,'R',1215],[1125,'C',1235],[1138,'C',1113],[1151,'R',1195],[1164,'C',1215],[1177,'C',1220],[1190,'C',1222],[1203,'R',1225],[1216,'R',1232],[1229,'R',1240],[1242,'R',1132],[1254,'R',1195],[1267,'C',1210],[1280,'R',1195],[1293,'R',1210],[1306,'C',1225],[1319,'C',1205],[1332,'R',1225],[1345,'R',1215],[1358,'C',1225],[1371,'R',1205],[1384,'R',1230],[1396,'R',1215]];
const v10=[[23,'R',1250],[63,'R',1020],[100,'R',1090],[140,'R',1418],[176,'R',647],[216,'R',690],[252,'R',500],[292,'R',670],[333,'R',133],[370,'R',517],[410,'R',133],[446,'C',775],[486,'R',285],[523,'C',378],[563,'R',485],[603,'C',133],[640,'C',358],[680,'C',700],[716,'R',842],[757,'R',1042],[793,'R',937]].map(b=>[1400+b[0]/3,b[1],700+b[2]/2.613]);
const vy=v=>1270.5-v*0.0321;
const mw=[...[[10,710],[30,722],[50,740],[70,738],[90,728],[110,722],[130,711],[150,711],[170,720],[190,733],[230,733],[250,732],[270,735],[300,738],[330,752],[350,756],[370,748],[390,735],[410,730],[470,730],[490,728],[520,722],[555,716],[575,722],[600,738],[625,741],[650,755],[670,762],[710,762],[735,760],[760,752],[780,748],[800,738],[820,725],[860,724],[900,732],[915,748],[940,700],[970,650],[990,643],[1015,620],[1050,680],[1080,716],[1100,718],[1120,730],[1160,730],[1180,712],[1200,708],[1218,660],[1240,520],[1262,440],[1280,412],[1298,404],[1320,425],[1340,530],[1360,615],[1390,650],[1420,676],[1450,676],[1480,684],[1500,675],[1520,662],[1568,658]].map(p=>[p[0]/1.568,1000+p[1]/3]),
 [1040,1215],[1090,1225],[1130,1205],[1170,1195],[1210,1200],[1240,1198],[1280,1185],[1300,1190],[1340,1205],[1380,1220],
 ...[[0,1345],[25,1330],[60,1280],[100,1222],[140,1232],[175,1090],[215,960],[250,870],[295,780],[330,520],[370,492],[410,365],[445,418],[487,345],[525,402],[560,395],[600,378],[640,290],[680,365],[720,470],[755,570],[793,775]].map(p=>[1400+p[0]/3,700+p[1]/2.613])];
const my=[...[[10,680],[40,681],[60,690],[85,712],[130,715],[150,730],[180,735],[220,725],[260,720],[300,738],[330,743],[360,740],[390,733],[440,740],[480,733],[520,728],[580,722],[595,733],[660,733],[690,745],[730,751],[780,748],[800,745],[845,743],[860,735],[915,738],[940,715],[975,690],[1000,688],[1030,680],[1090,685],[1115,675],[1145,698],[1170,714],[1200,712],[1220,695],[1240,640],[1260,585],[1290,560],[1330,537],[1355,530],[1400,530],[1422,550],[1440,605],[1460,645],[1480,665],[1568,670]].map(p=>[p[0]/1.568,1000+p[1]/3]),
 [1040,1222],[1090,1220],[1130,1215],[1170,1212],[1210,1208],[1250,1205],[1290,1200],[1340,1198],[1380,1200],
 ...[[0,1322],[25,1322],[60,1290],[100,1282],[140,1290],[225,1130],[295,995],[350,825],[410,668],[445,648],[490,550],[525,460],[560,445],[600,370],[640,356],[680,356],[720,440],[755,485],[793,572]].map(p=>[1400+p[0]/3,700+p[1]/2.613])];
let t='';
for(let v=2000;v<=18000;v+=2000)t+=ln(0,vy(v).toFixed(1),1711,vy(v).toFixed(1),'#a00000',1.4,'stroke-dasharray="2 8"');
t+=`<rect x="1596" y="680" width="11" height="71" fill="#0a1212"/>`;
for(const [x,c,top] of [...v12,...vMid,...v10]){
 if(c=='C')t+=`<rect x="${(x-5.2).toFixed(1)}" y="${top.toFixed(1)}" width="10.4" height="${(1271-top).toFixed(1)}" fill="${CY}"/>`;
 else t+=`<rect x="${(x-4.5).toFixed(1)}" y="${top.toFixed(1)}" width="9" height="${(1270.5-top).toFixed(1)}" fill="#000" stroke="${RED}" stroke-width="1.5"/>`;}
t+=poly(my,'#e6e600',1.7)+poly(mw,'#d8d8d8',1.5);
t+=ln(0,648,1787,648,AX,2.4)+ln(1711,648,1711,1282,AX,2.4);
for(let v=1000;v<=19000;v+=1000){const y=vy(v).toFixed(1),big=v%2000==0;t+=ln(1711,y,big?1721:1716,y,AX,big?1.6:1.2);if(big)t+=txt(1778,vy(v)+7,v,LBL,18,'end');}
t+=`<rect x="1712" y="859" width="74" height="24" fill="#10109a"/>`+txt(1713,877,'12063','#b4b4e8',18,'start','letter-spacing="1"');
t+=ln(1711,1259,1787,1259,AX,1.6)+txt(1714,1277,'X100',LBL,18);
document.getElementById('vc').innerHTML=t;

/* ---------- date axis ---------- */
let d=ln(0,1282,1787,1282,AX,2.4);
for(let x=301;x<1711;x+=64.5)d+=ln(x.toFixed(1),1282,x.toFixed(1),1288,AX,1);
for(const [x,l] of [[7,'2022年'],[304,'4'],[548,'5'],[1062,'7'],[1332,'8'],[1627,'9']]) d+=txt(x,1301,l,LBL,18);
for(const x of [301,545,1059,1329,1625,1711]) d+=ln(x,1282,x,1305,AX,1.6);
d+=`<rect x="761" y="1283" width="118" height="22" fill="#0a0a80"/>`+txt(763,1301,'2022/05/30/—','#c4c4f0',17);
d+=txt(1731,1302,'日线','#b8b8b8',18);
document.getElementById('dc').innerHTML=d;
</script>
</body>
</html>
